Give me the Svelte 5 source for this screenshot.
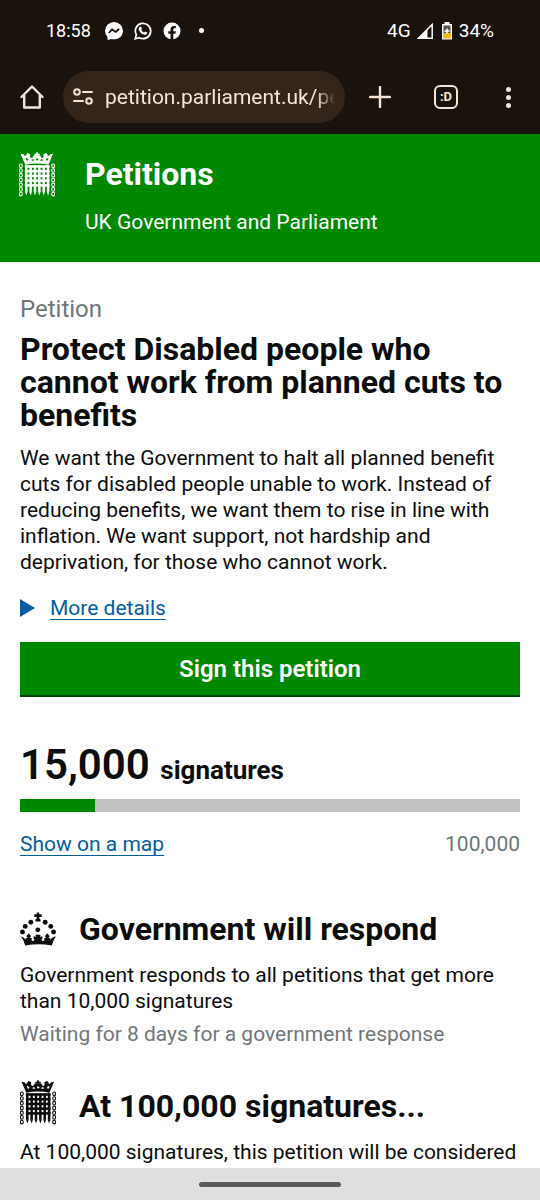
<script lang="ts">
	const petition = {
		title: 'Protect Disabled people who cannot work from planned cuts to benefits',
		background:
			'We want the Government to halt all planned benefit cuts for disabled people unable to work. Instead of reducing benefits, we want them to rise in line with inflation. We want support, not hardship and deprivation, for those who cannot work.',
		signatures: 15000,
		threshold: 100000
	};

	let percent = $derived((petition.signatures / petition.threshold) * 100);

	function formatCount(n: number): string {
		return n.toLocaleString('en-GB');
	}

	// Portcullis lattice
	const uprights = [35, 47, 59, 71, 83, 95];
	const crossbars = [54, 67, 80, 93, 106];
	const links = [52, 65, 78, 91, 104, 117, 130];
	// Jewels round the arch of the crown
	const jewels = [
		[19, 67],
		[27, 51],
		[43, 39],
		[84, 39],
		[100, 51],
		[108, 67],
		[63, 61]
	];
</script>

{#snippet portcullis()}
	<svg class="portcullis" viewBox="15 14 99 124" aria-hidden="true">
		<g fill="currentColor">
			<path d="M62 15h5v4h5v5h-5v6h-5v-6h-5v-5h5z" />
			<path d="M19 19l8 1 5 6 6-9 8 3-1 8 6 3 5-8 8 4 9-4 5 8 5-3-1-8 8-3 6 9 5-6 8-1-4 9-9 21q-31-6-64 0l-9-21z" />
		</g>
		<path class="gaps" d="M34 30l7 3-2 5-4-1zM96 30l-7 3 2 5 4-1zM48 36l6-3 3 5h-6zM82 36l-6-3-3 5h6zM62 32h6v5h-6z" />
		<g stroke="currentColor" fill="none">
			{#each crossbars as y}
				<path stroke-width="7" d="M31 {y}h68" />
			{/each}
			{#each uprights as x}
				<path stroke-width="7" d="M{x} 51v72" />
			{/each}
			{#each links as y}
				<ellipse cx="20" cy={y} rx="4" ry="5" stroke-width="3" />
				<ellipse cx="109" cy={y} rx="4" ry="5" stroke-width="3" />
			{/each}
		</g>
		{#each uprights as x}
			<path fill="currentColor" d="M{x - 4} 122h8l-4 12z" />
		{/each}
	</svg>
{/snippet}

<div class="screen">
	<div class="chrome">
		<div class="status">
			<span class="clock">18:58</span>
			<svg class="app" viewBox="0 0 18 18" aria-label="Messenger">
				<path fill="#fff" d="M9 0a9 9 0 0 1 9 8.700c0 5-4 8.600-9 8.600-1 0-1.800-.1-2.600-.4L2.500 18v-3.100A8.600 8.600 0 0 1 0 8.700 9 9 0 0 1 9 0z" />
				<path fill="none" stroke="#1a120d" stroke-width="1.800" d="M3.800 11l3.300-3.500 3.600 2.400L14.200 7" />
			</svg>
			<svg class="app" viewBox="0 0 20 20" aria-label="WhatsApp">
				<path fill="none" stroke="#fff" stroke-width="1.900" d="M1.400 18.600l1.200-4.500a8.500 8.500 0 1 1 3.300 3.300z" />
				<path fill="#fff" d="M6.700 5.200h1.200l1 2.300-.9 1.300c.7 1.400 1.800 2.400 3.200 3l1.200-1.300 2.300 1.100c0 1.800-1.200 2.700-2.600 2.700-3.400-.3-6.700-3.500-6.900-6.700 0-1 .6-2 1.500-2.400z" />
			</svg>
			<svg class="app" viewBox="0 0 18 18" aria-label="Facebook">
				<circle cx="9" cy="9" r="8.500" fill="#fff" />
				<path fill="#1a120d" d="M7.500 18v-6.200H5.300V9.300h2.200V7.500c0-2.300 1.300-3.600 3.400-3.600l1.900.2v2.100h-1.100c-1 0-1.400.6-1.400 1.300v1.800h2.500l-.4 2.500h-2.100V18z" />
			</svg>
			<span class="dot"></span>
			<span class="network">4G</span>
			<svg class="signal" viewBox="0 0 16 16" aria-hidden="true">
				<path fill="none" stroke="#fff" stroke-width="1.500" d="M1.500 15.200L15.200 1.500v13.700z" />
				<path fill="#fff" d="M.5 16L10.500 6v10z" />
			</svg>
			<svg class="battery" viewBox="0 0 12 18" aria-hidden="true">
				<path fill="#fff" d="M3.500 0h5v2H11v15.500H1V2h2.500z" />
				<path fill="#5a5048" d="M2.500 3.500h7V11h-7z" />
				<path fill="#f6b90c" d="M2 11h8v5.500H2z" />
				<path stroke="#fff" stroke-width="1.600" d="M6 6.500v5M3.500 9h5" />
			</svg>
			<span>34%</span>
		</div>

		<div class="toolbar">
			<button class="home" aria-label="Home">
				<svg viewBox="0 0 24 24"><path d="M1.500 12L12 1.500 22.500 12M4.200 10v12.500h15.600V10" /></svg>
			</button>
			<div class="address">
				<svg class="tune" viewBox="0 0 20 18" aria-hidden="true">
					<circle cx="4" cy="4" r="2.800" />
					<path d="M10 4h9M1 13h9" />
					<circle cx="16" cy="13" r="2.800" />
				</svg>
				<input aria-label="Web address" value="petition.parliament.uk/petitions" />
			</div>
			<button class="add" aria-label="New tab">
				<svg viewBox="0 0 22 22"><path d="M11 1v20M1 11h20" /></svg>
			</button>
			<button class="tabs" aria-label="Tabs">:D</button>
			<button class="menu" aria-label="More options"><i></i><i></i><i></i></button>
		</div>
	</div>

	<header>
		{@render portcullis()}
		<div>
			<a class="brand" href="#petitions">Petitions</a>
			<p>UK Government and Parliament</p>
		</div>
	</header>

	<main>
		<p class="context">Petition</p>
		<h1>{petition.title}</h1>
		<p>{petition.background}</p>

		<a class="details" href="#details">
			<svg viewBox="0 0 15 18" aria-hidden="true"><path fill="currentColor" d="M0 0l15 9-15 9z" /></svg>
			<span>More details</span>
		</a>

		<button class="sign">Sign this petition</button>

		<p class="count"><strong>{formatCount(petition.signatures)}</strong> signatures</p>
		<div class="graph"><div class="bar" style="width: {percent}%"></div></div>
		<div class="under-graph">
			<a href="#map">Show on a map</a>
			<span>{formatCount(petition.threshold)}</span>
		</div>

		<section>
			<h2>
				<svg class="crown" viewBox="12 10 103 97" aria-hidden="true">
					<g fill="currentColor">
						<path d="M60 11h7v5h7v8h-7v4q5 3 4 9H56q-1-6 4-9v-4h-7v-8h7z" />
						{#each jewels as [x, y]}
							<circle cx={x} cy={y} r="7" />
						{/each}
						<path d="M12 79q11 2 17 10l-1-5h6l-4-5 7-8 7 8-4 5h6l-1 7q5 4 9-2l-3-2v-8l7 2-2-6h15l-2 6 7-2v8l-3 2q4 6 9 2l-1-7h6l-4-5 7-8 7 8-4 5h6l-1 5q6-8 17-10-8 10-12 27-38-8-76 0-4-17-13-27z" />
					</g>
				</svg>
				Government will respond
			</h2>
			<p>Government responds to all petitions that get more than 10,000 signatures</p>
			<p class="waiting">Waiting for 8 days for a government response</p>
		</section>

		<section>
			<h2>
				{@render portcullis()}
				At 100,000 signatures...
			</h2>
			<p>At 100,000 signatures, this petition will be considered</p>
		</section>
	</main>

	<div class="gesture"><span></span></div>
</div>

<style>
	:global(body) {
		margin: 0;
		background: #fff;
	}

	.screen {
		display: flex;
		flex-direction: column;
		min-height: 100vh;
		font-family: Roboto, 'Liberation Sans', sans-serif;
		font-size: 21px;
		line-height: 26px;
		color: #0b0c0c;
	}

	p,
	h1,
	h2 {
		margin: 0;
	}

	button {
		padding: 0;
		border: 0;
		background: none;
		font-family: inherit;
		color: inherit;
	}

	svg {
		display: block;
		flex-shrink: 0;
	}

	/* Browser chrome */
	.chrome {
		flex-shrink: 0;
		padding-bottom: 1px;
		background: #1a120d;
		color: #f5e4d7;
	}

	.status {
		display: flex;
		align-items: center;
		height: 61px;
		padding: 0 46px;
		color: #fff;
		font-size: 19px;
	}

	.clock {
		margin-right: 14px;
		font-size: 18px;
	}

	.app {
		width: 18px;
		height: 18px;
		margin-right: 11px;
	}

	.dot {
		width: 5px;
		height: 5px;
		margin-left: 7px;
		border-radius: 50%;
		background: #fff;
	}

	.network {
		margin-left: auto;
	}

	.signal {
		width: 16px;
		height: 16px;
		margin: 0 8px 0 6px;
	}

	.battery {
		width: 12px;
		height: 18px;
		margin-right: 6px;
	}

	.toolbar {
		display: flex;
		align-items: center;
		height: 72px;
		padding: 0 29px 0 20px;
	}

	.toolbar svg {
		fill: none;
		stroke: currentColor;
		stroke-width: 2.4;
		stroke-linecap: round;
	}

	.home svg {
		width: 24px;
		height: 24px;
		stroke-linejoin: round;
	}

	.address {
		display: flex;
		flex: 1;
		align-items: center;
		min-width: 0;
		height: 52px;
		margin: 0 24px 0 19px;
		padding: 0 10px;
		box-sizing: border-box;
		border-radius: 26px;
		background: #33251a;
	}

	.toolbar .tune {
		width: 20px;
		height: 18px;
		margin-right: 12px;
		stroke-width: 2;
	}

	.address input {
		flex: 1;
		min-width: 0;
		padding: 0;
		border: 0;
		outline: 0;
		background: none;
		color: #f5e4d7;
		font: 21px Roboto, 'Liberation Sans', sans-serif;
		mask-image: linear-gradient(to right, #000 92%, transparent);
	}

	.add svg {
		width: 22px;
		height: 22px;
	}

	.tabs {
		width: 24px;
		height: 24px;
		margin: 0 48px 0 43px;
		box-sizing: border-box;
		border: 2px solid currentColor;
		border-radius: 6px;
		font-size: 13px;
		line-height: 18px;
		font-weight: 700;
	}

	.menu {
		display: grid;
		gap: 3px;
	}

	.menu i {
		width: 5px;
		height: 5px;
		border-radius: 50%;
		background: currentColor;
	}

	/* Site header */
	header {
		display: flex;
		flex-shrink: 0;
		gap: 30px;
		height: 128px;
		padding: 18px 19px 0;
		box-sizing: border-box;
		background: #008800;
		color: #fff;
	}

	.portcullis {
		width: 36px;
		height: 45px;
	}

	.gaps {
		fill: #fff;
	}

	header .gaps {
		fill: #008800;
	}

	.brand {
		display: block;
		margin: 4px 0 18px;
		color: #fff;
		font-size: 32px;
		line-height: 36px;
		font-weight: 700;
		text-decoration: none;
	}

	header p {
		line-height: 24px;
	}

	/* Petition */
	main {
		flex: 1;
		padding: 34px 20px 0;
	}

	.context {
		margin-bottom: 11px;
		color: #6f777b;
		font-size: 24px;
	}

	h1 {
		margin-bottom: 13px;
		font-size: 32px;
		line-height: 33px;
		font-weight: 700;
	}

	a {
		color: #005ea5;
		text-decoration-thickness: 1px;
		text-underline-offset: 4px;
	}

	.details {
		display: flex;
		align-items: center;
		gap: 15px;
		margin: 20px 0 21px;
		text-decoration: none;
	}

	.details svg {
		width: 15px;
		height: 18px;
	}

	.details span {
		text-decoration: underline 1px;
	}

	.sign {
		display: block;
		width: 100%;
		height: 55px;
		border-bottom: 2px solid #004400;
		background: #008800;
		color: #fff;
		font-size: 24px;
		font-weight: 600;
	}

	.count {
		margin: 42px 0 3px;
		font-size: 26px;
		line-height: 52px;
		font-weight: 700;
	}

	.count strong {
		margin-right: 4px;
		font-size: 42px;
		font-weight: 600;
	}

	.graph {
		height: 13px;
		background: #bfc1c3;
	}

	.bar {
		height: 100%;
		background: #008800;
	}

	.under-graph {
		display: flex;
		justify-content: space-between;
		margin-top: 19px;
		color: #6f777b;
	}

	section {
		margin-top: 52px;
	}

	section + section {
		margin-top: 39px;
	}

	h2 {
		display: flex;
		align-items: center;
		gap: 23px;
		height: 40px;
		margin-bottom: 13px;
		font-size: 32px;
		line-height: 40px;
		font-weight: 700;
	}

	h2 .portcullis {
		margin-bottom: 8px;
	}

	.crown {
		width: 36px;
		height: 34px;
	}

	.waiting {
		margin-top: 7px;
		color: #6f777b;
	}

	/* System navigation */
	.gesture {
		display: flex;
		flex-shrink: 0;
		align-items: center;
		justify-content: center;
		height: 32px;
		background: #dedfe1;
	}

	.gesture span {
		width: 142px;
		height: 5px;
		border-radius: 3px;
		background: #58595b;
	}
</style>
